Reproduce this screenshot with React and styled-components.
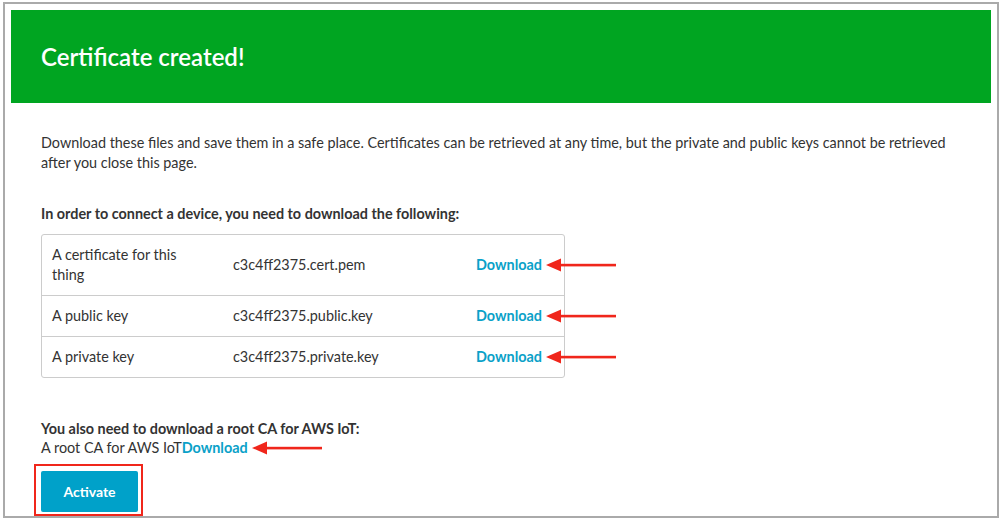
import React from 'react';
import styled, { createGlobalStyle } from 'styled-components';

const GlobalStyles = createGlobalStyle`
  html, body {
    margin: 0;
    padding: 0;
    background: #ffffff;
  }
  body {
    font-family: Lato, "Open Sans", "Liberation Sans", sans-serif;
    color: #333333;
  }
`;

const files = [
  { label: ['A certificate for this', 'thing'], name: 'c3c4ff2375.cert.pem' },
  { label: ['A public key'], name: 'c3c4ff2375.public.key' },
  { label: ['A private key'], name: 'c3c4ff2375.private.key' },
];

const Arrow = ({ width = 70 }) => (
  <svg width={width} height="14" viewBox={`0 0 ${width} 14`}>
    <polygon points="0,7 15,0.5 15,13.5" fill="#f0261b" />
    <rect x="13" y="5.8" width={width - 13} height="2.6" fill="#f0261b" />
  </svg>
);

const App = () => {
  return (
    <>
      <GlobalStyles />
      <Frame>
        <Banner>
          <Title>Certificate created!</Title>
        </Banner>
        <Body>
          <Intro>
            Download these files and save them in a safe place. Certificates can be retrieved at any time, but the private and public keys cannot be retrieved after you close this page.
          </Intro>
          <Heading>In order to connect a device, you need to download the following:</Heading>
          <Table>
            {files.map((f, i) => (
              <Row key={f.name} first={i === 0} tall={f.label.length > 1}>
                <Cell>
                  {f.label.map((l) => (
                    <div key={l}>{l}</div>
                  ))}
                </Cell>
                <Cell>{f.name}</Cell>
                <LinkCell>
                  <Link href="#">Download</Link>
                  <ArrowMark>
                    <Arrow />
                  </ArrowMark>
                </LinkCell>
              </Row>
            ))}
          </Table>
          <RootBlock>
            <Heading as="div" tight>You also need to download a root CA for AWS IoT:</Heading>
            <RootLine>
              A root CA for AWS IoT
              <LinkCell>
                <Link href="#">Download</Link>
                <ArrowMark>
                  <Arrow />
                </ArrowMark>
              </LinkCell>
            </RootLine>
          </RootBlock>
          <Highlight>
            <Button>Activate</Button>
          </Highlight>
        </Body>
      </Frame>
    </>
  );
};

export default App;

const Frame = styled.div`
  box-sizing: border-box;
  margin: 2px 0 0 3px;
  width: 996px;
  height: 516px;
  border: 2px solid #aaaaaa;
  padding: 6px;
  position: relative;
`;

const Banner = styled.div`
  background: #00a521;
  height: 93px;
  display: flex;
  align-items: center;
  padding-left: 30px;
`;

const Title = styled.h1`
  margin: 0;
  color: #ffffff;
  font-size: 24px;
  font-weight: 600;
`;

const Body = styled.div`
  padding: 30px 0 0 30px;
  font-size: 14.4px;
  line-height: 19.5px;
`;

const Intro = styled.p`
  margin: 0;
  max-width: 925px;
`;

const Heading = styled.p`
  margin: ${({ tight }) => (tight ? '0' : '32px 0 10px')};
  font-weight: 700;
`;

const Table = styled.div`
  width: 524px;
  border: 1px solid #cccccc;
  border-radius: 3px;
  box-sizing: border-box;
`;

const Row = styled.div`
  display: grid;
  grid-template-columns: 181px 243px 1fr;
  align-items: center;
  padding: 0 10px;
  height: ${({ tall }) => (tall ? '60px' : '40px')};
  border-top: ${({ first }) => (first ? 'none' : '1px solid #cccccc')};
`;

const Cell = styled.div`
  color: #333333;
`;

const LinkCell = styled.span`
  position: relative;
  display: inline-block;
  justify-self: start;
`;

const Link = styled.a`
  color: #0aa1c8;
  font-weight: 700;
  text-decoration: none;
`;

const ArrowMark = styled.span`
  position: absolute;
  left: calc(100% + 4px);
  top: 50%;
  transform: translateY(-50%);
  display: flex;
`;

const RootBlock = styled.div`
  margin-top: 41px;
`;

const RootLine = styled.div`
  display: flex;
`;

const Highlight = styled.div`
  margin: 6px 0 0 -7px;
  width: fit-content;
  border: 2px solid #f0261b;
  padding: 5px 3px 2px 5px;
  position: relative;
  z-index: 1;
`;

const Button = styled.button`
  display: block;
  width: 97px;
  height: 41px;
  border: none;
  border-radius: 2px;
  background: #00a1c9;
  color: #ffffff;
  font-family: Lato, "Open Sans", "Liberation Sans", sans-serif;
  font-size: 14px;
  font-weight: 700;
`;
